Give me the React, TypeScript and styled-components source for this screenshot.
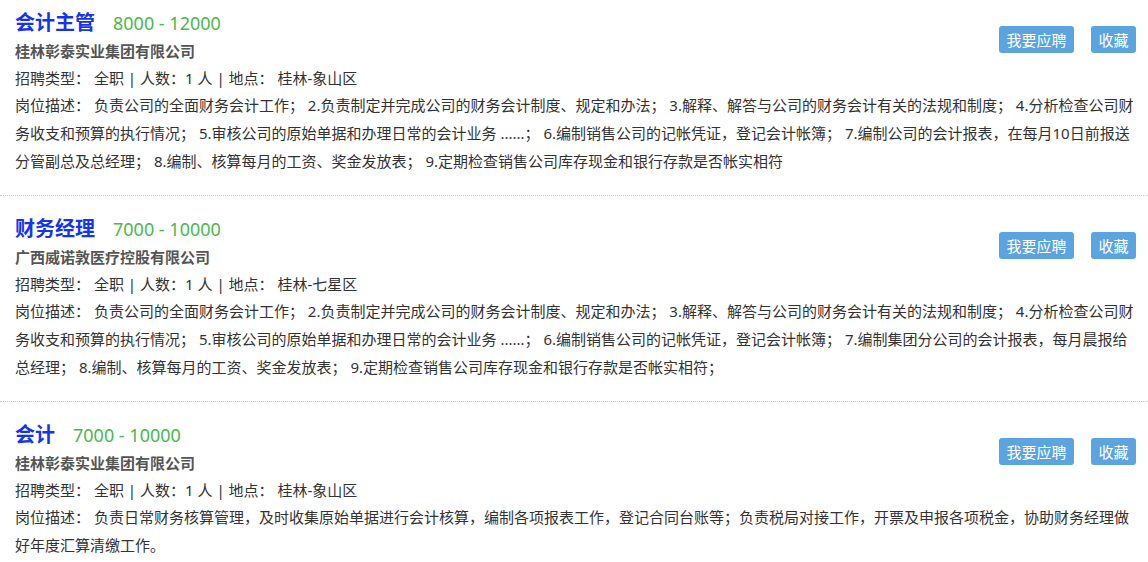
import React from "react";
import styled, { createGlobalStyle } from "styled-components";

const GlobalStyle = createGlobalStyle`
  html, body {
    margin: 0;
    padding: 0;
    background: #fff;
  }
  body {
    font-family: "Noto Sans", "Noto Sans CJK SC", sans-serif;
    font-size: 15px;
    color: #333;
  }
`;

type Job = {
  title: string;
  salary: string;
  company: string;
  type: string;
  count: number;
  place: string;
  desc: string;
};

const jobs: Job[] = [
  {
    title: "会计主管",
    salary: "8000 - 12000",
    company: "桂林彰泰实业集团有限公司",
    type: "全职",
    count: 1,
    place: "桂林-象山区",
    desc:
      "负责公司的全面财务会计工作； 2.负责制定并完成公司的财务会计制度、规定和办法； 3.解释、解答与公司的财务会计有关的法规和制度； 4.分析检查公司财务收支和预算的执行情况； 5.审核公司的原始单据和办理日常的会计业务 ......； 6.编制销售公司的记帐凭证，登记会计帐簿； 7.编制公司的会计报表，在每月10日前报送分管副总及总经理； 8.编制、核算每月的工资、奖金发放表； 9.定期检查销售公司库存现金和银行存款是否帐实相符",
  },
  {
    title: "财务经理",
    salary: "7000 - 10000",
    company: "广西威诺敦医疗控股有限公司",
    type: "全职",
    count: 1,
    place: "桂林-七星区",
    desc:
      "负责公司的全面财务会计工作； 2.负责制定并完成公司的财务会计制度、规定和办法； 3.解释、解答与公司的财务会计有关的法规和制度； 4.分析检查公司财务收支和预算的执行情况； 5.审核公司的原始单据和办理日常的会计业务 ......； 6.编制销售公司的记帐凭证，登记会计帐簿； 7.编制集团分公司的会计报表，每月晨报给总经理； 8.编制、核算每月的工资、奖金发放表； 9.定期检查销售公司库存现金和银行存款是否帐实相符；",
  },
  {
    title: "会计",
    salary: "7000 - 10000",
    company: "桂林彰泰实业集团有限公司",
    type: "全职",
    count: 1,
    place: "桂林-象山区",
    desc:
      "负责日常财务核算管理，及时收集原始单据进行会计核算，编制各项报表工作，登记合同台账等；负责税局对接工作，开票及申报各项税金，协助财务经理做好年度汇算清缴工作。",
  },
];

const List = styled.div`
  display: flex;
  flex-direction: column;
`;

const Item = styled.div`
  padding: 19px 12px 20px 15px;
  border-bottom: 1px dotted #c8c8c8;

  &:first-child {
    padding-top: 9px;
  }

  &:last-child {
    border-bottom: none;
  }

  &::after {
    content: "";
    display: block;
    clear: both;
  }
`;

const Actions = styled.div`
  float: right;
  display: flex;
  gap: 17px;
  margin-top: 17px;
`;

const ActionButton = styled.button`
  height: 27px;
  padding: 0 7.5px;
  border: none;
  border-radius: 3px;
  background: #5ca4e0;
  color: #fff;
  font-family: "Noto Sans CJK SC", sans-serif;
  font-size: 15px;
  line-height: 27px;
  cursor: pointer;
`;

const TitleRow = styled.div`
  display: flex;
  align-items: baseline;
  gap: 18px;
  line-height: 28px;
`;

const Title = styled.a`
  font-size: 20px;
  font-weight: bold;
  color: #1434f0;
  text-decoration: none;
`;

const Salary = styled.span`
  font-size: 18px;
  color: #4cb84c;
`;

const Company = styled.div`
  font-weight: bold;
  color: #555;
  line-height: 28px;
`;

const Info = styled.div`
  line-height: 26px;
  color: #333;
`;

const Desc = styled.div`
  line-height: 28px;
  color: #333;
`;

const JobItem = ({ job }: { job: Job }) => (
  <Item>
    <Actions>
      <ActionButton>我要应聘</ActionButton>
      <ActionButton>收藏</ActionButton>
    </Actions>
    <TitleRow>
      <Title href="#">{job.title}</Title>
      <Salary>{job.salary}</Salary>
    </TitleRow>
    <Company>{job.company}</Company>
    <Info>
      招聘类型： {job.type} | 人数：{job.count} 人 | 地点： {job.place}
    </Info>
    <Desc>岗位描述： {job.desc}</Desc>
  </Item>
);

export default function App() {
  return (
    <>
      <GlobalStyle />
      <List>
        {jobs.map((job) => (
          <JobItem key={job.title} job={job} />
        ))}
      </List>
    </>
  );
}
